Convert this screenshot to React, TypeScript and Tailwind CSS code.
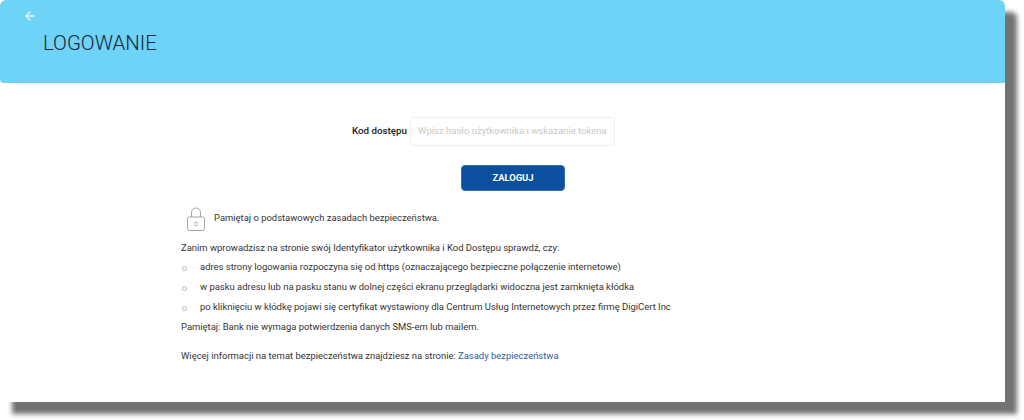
import { ArrowLeft } from 'lucide-react';

const rules = [
  'adres strony logowania rozpoczyna się od https (oznaczającego bezpieczne połączenie internetowe)',
  'w pasku adresu lub na pasku stanu w dolnej części ekranu przeglądarki widoczna jest zamknięta kłódka',
  'po kliknięciu w kłódkę pojawi się certyfikat wystawiony dla Centrum Usług Internetowych przez firmę DigiCert Inc',
];

function PadlockIcon() {
  return (
    <svg width="20" height="24" viewBox="0 0 20 24" fill="none" stroke="#a3a3a3" strokeWidth="1">
      <path d="M5.5 10V5.5a4.5 4.5 0 0 1 9 0V10" />
      <rect x="1.5" y="10" width="17" height="13.5" rx="2" />
      <rect x="8.5" y="15" width="3" height="4" rx="1.5" strokeWidth="0.8" />
    </svg>
  );
}

export default function App() {
  return (
    <div className="w-[1024px] h-[420px] bg-white overflow-hidden font-['Roboto',sans-serif]">
      <div className="w-[1005px] h-[402px] bg-white rounded-t-md shadow-[12px_12px_5px_#727272]">
        <header className="h-[83px] bg-[#6fd3f7] rounded-t-md rounded-bl-sm pt-[9px] pl-[23px]">
          <ArrowLeft size={14} strokeWidth={2.5} className="text-[#e8f8ff]" />
          <h1 className="mt-[8px] ml-[20px] text-[20.4px] font-light leading-[24px] text-[#10263a]">LOGOWANIE</h1>
        </header>

        <div className="pt-[34px]">
          <div className="flex items-center h-[29px] pl-[352px] gap-[3px]">
            <label className="w-[55px] text-[9.75px] font-medium whitespace-nowrap text-[#222222]">Kod dostępu</label>
            <div className="w-[205px] h-[29px] border border-[#eeeeee] rounded-sm flex items-center px-[7px] text-[9.5px] whitespace-nowrap text-[#c8c8c8]">
              Wpisz hasło użytkownika i wskazanie tokena
            </div>
          </div>

          <div className="pl-[461px] mt-[18px]">
            <button className="w-[104px] h-[26px] bg-[#0b4f9e] border border-[#2c6db5] rounded-sm text-white text-[9.4px] font-bold">ZALOGUJ</button>
          </div>

          <div className="pl-[181px] mt-[15px] text-[9.45px] text-[#333333]">
            <div className="flex items-center gap-[8px] pl-[5px] h-[25px]">
              <PadlockIcon />
              <span className="-mt-[1px]">Pamiętaj o podstawowych zasadach bezpieczeństwa.</span>
            </div>
            <p className="mt-[7px] leading-[20px]">Zanim wprowadzisz na stronie swój Identyfikator użytkownika i Kod Dostępu sprawdź, czy:</p>
            <ul className="-mt-px">
              {rules.map((rule) => (
                <li key={rule} className="flex items-center h-[20px]">
                  <span className="w-[5px] h-[5px] rounded-full border border-[#bbbbbb] ml-[1px] mr-[13px] mt-[3px]" />
                  {rule}
                </li>
              ))}
            </ul>
            <p className="leading-[20px]">Pamiętaj: Bank nie wymaga potwierdzenia danych SMS-em lub mailem.</p>
            <p className="mt-[9px] leading-[20px]">
              Więcej informacji na temat bezpieczeństwa znajdziesz na stronie:{' '}
              <a className="text-[#2b5c9e]">Zasady bezpieczeństwa</a>
            </p>
          </div>
        </div>
      </div>
    </div>
  );
}
